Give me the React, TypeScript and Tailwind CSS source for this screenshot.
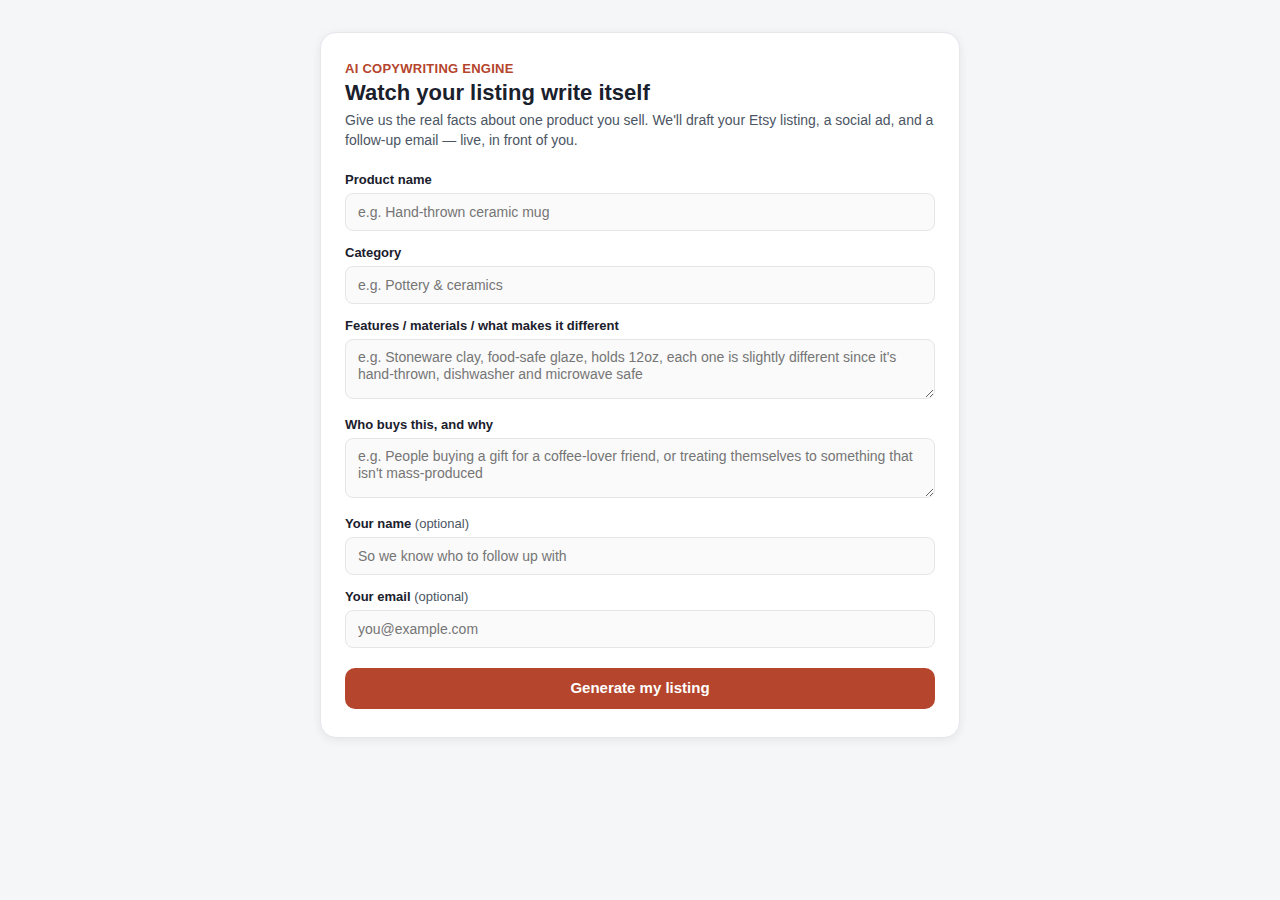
import React from 'react'

const inputCls =
  'block w-full h-[38px] rounded-lg border border-[#e3e5e8] bg-[#fafafa] px-3 text-[14px] text-[#1a202c] placeholder:text-[#757575] outline-none'

const areaCls =
  'block w-full h-[60px] rounded-lg border border-[#e3e5e8] bg-[#fafafa] px-3 py-[9px] text-[14px] leading-[17px] text-[#1a202c] placeholder:text-[#757575] outline-none'

function Field({
  label,
  optional,
  tall,
  children,
}: {
  label: string
  optional?: boolean
  tall?: boolean
  children: React.ReactNode
}) {
  return (
    <div className={tall ? 'mb-[18px]' : 'mb-[14px]'}>
      <label className="block mb-[6px] text-[13px] leading-[15px] font-bold text-[#1a202c]">
        {label}
        {optional && <span className="font-normal text-[#4b5563]"> (optional)</span>}
      </label>
      {children}
    </div>
  )
}

export default function App() {
  return (
    <div
      className="min-h-screen bg-[#f5f6f8] pt-8"
      style={{ fontFamily: '"Liberation Sans", Arial, Helvetica, sans-serif' }}
    >
      <div className="mx-auto w-[640px] rounded-2xl border border-[#e5e7eb] bg-white px-6 pt-[27px] pb-[28px] shadow-[0_2px_10px_rgba(0,0,0,0.07)]">
        <div className="mb-[22px]">
          <div className="text-[13px] leading-[18px] font-bold uppercase tracking-[0.02em] text-[#b5452c]">
            AI copywriting engine
          </div>
          <h1 className="mt-[1px] text-[22px] leading-[28px] font-bold text-[#1a202c]">
            Watch your listing write itself
          </h1>
          <p className="mt-[3px] text-[14px] leading-[20px] text-[#4b5563]">
            Give us the real facts about one product you sell. We'll draft your Etsy listing, a social
            ad, and a follow-up email — live, in front of you.
          </p>
        </div>

        <Field label="Product name">
          <input className={inputCls} placeholder="e.g. Hand-thrown ceramic mug" />
        </Field>
        <Field label="Category">
          <input className={inputCls} placeholder="e.g. Pottery & ceramics" />
        </Field>
        <Field label="Features / materials / what makes it different" tall>
          <textarea
            className={areaCls}
            rows={2}
            placeholder="e.g. Stoneware clay, food-safe glaze, holds 12oz, each one is slightly different since it's hand-thrown, dishwasher and microwave safe"
          />
        </Field>
        <Field label="Who buys this, and why" tall>
          <textarea
            className={areaCls}
            rows={2}
            placeholder="e.g. People buying a gift for a coffee-lover friend, or treating themselves to something that isn't mass-produced"
          />
        </Field>
        <Field label="Your name" optional>
          <input className={inputCls} placeholder="So we know who to follow up with" />
        </Field>
        <Field label="Your email" optional>
          <input className={inputCls} placeholder="you@example.com" />
        </Field>

        <button className="mt-5 block w-full h-[41px] rounded-[10px] bg-[#b5452c] text-[15px] font-bold text-white">
          Generate my listing
        </button>
      </div>
    </div>
  )
}
